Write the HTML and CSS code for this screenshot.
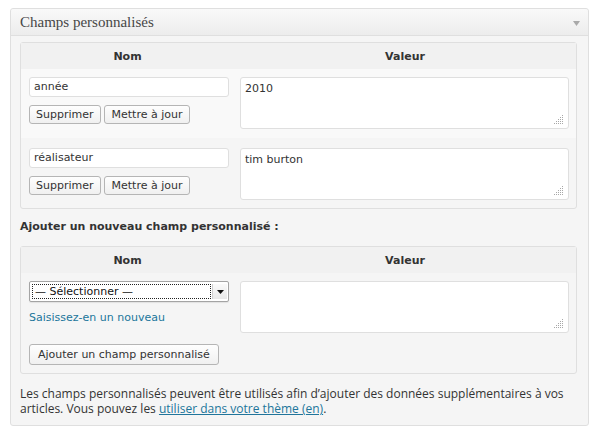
FILE: index.html
```html
<!DOCTYPE html>
<html lang="fr">
<head>
<meta charset="utf-8">
<title>Champs personnalisés</title>
<link rel="stylesheet" href="styles.css">
</head>
<body>
<div class="postbox">
  <div class="hndle">
    <h3>Champs personnalisés</h3>
    <svg class="toggle" width="7" height="5" viewBox="0 0 7 5"><path d="M0 0H7L3.5 5Z" fill="#a9a9a9"/></svg>
  </div>
  <div class="inside">
    <table class="list">
      <colgroup><col class="c-key"><col></colgroup>
      <thead><tr><th>Nom</th><th>Valeur</th></tr></thead>
      <tbody>
        <tr class="alt">
          <td class="key">
            <div class="field">année</div>
            <div class="btns"><span class="btn">Supprimer</span><span class="btn wide">Mettre à jour</span></div>
          </td>
          <td class="val"><div class="area">2010<svg class="grip" width="9" height="9" viewBox="0 0 9 9"><g fill="#a8a8a8"><rect x="8" y="0" width="1" height="1"/><rect x="6" y="2" width="1" height="1"/><rect x="8" y="2" width="1" height="1"/><rect x="4" y="4" width="1" height="1"/><rect x="6" y="4" width="1" height="1"/><rect x="8" y="4" width="1" height="1"/><rect x="2" y="6" width="1" height="1"/><rect x="4" y="6" width="1" height="1"/><rect x="6" y="6" width="1" height="1"/><rect x="8" y="6" width="1" height="1"/><rect x="0" y="8" width="1" height="1"/><rect x="2" y="8" width="1" height="1"/><rect x="4" y="8" width="1" height="1"/><rect x="6" y="8" width="1" height="1"/><rect x="8" y="8" width="1" height="1"/></g></svg></div></td>
        </tr>
        <tr class="second">
          <td class="key">
            <div class="field">réalisateur</div>
            <div class="btns"><span class="btn">Supprimer</span><span class="btn wide">Mettre à jour</span></div>
          </td>
          <td class="val"><div class="area">tim burton<svg class="grip" width="9" height="9" viewBox="0 0 9 9"><g fill="#a8a8a8"><rect x="8" y="0" width="1" height="1"/><rect x="6" y="2" width="1" height="1"/><rect x="8" y="2" width="1" height="1"/><rect x="4" y="4" width="1" height="1"/><rect x="6" y="4" width="1" height="1"/><rect x="8" y="4" width="1" height="1"/><rect x="2" y="6" width="1" height="1"/><rect x="4" y="6" width="1" height="1"/><rect x="6" y="6" width="1" height="1"/><rect x="8" y="6" width="1" height="1"/><rect x="0" y="8" width="1" height="1"/><rect x="2" y="8" width="1" height="1"/><rect x="4" y="8" width="1" height="1"/><rect x="6" y="8" width="1" height="1"/><rect x="8" y="8" width="1" height="1"/></g></svg></div></td>
        </tr>
      </tbody>
    </table>

    <p class="add-title">Ajouter un nouveau champ personnalisé :</p>

    <table class="list">
      <colgroup><col class="c-key"><col></colgroup>
      <thead><tr><th>Nom</th><th>Valeur</th></tr></thead>
      <tbody>
        <tr>
          <td class="key new">
            <div class="select"><span class="sel-label">— Sélectionner —</span><span class="sel-arrow"><svg width="7" height="4" viewBox="0 0 7 4"><path d="M0 0H7L3.5 4Z" fill="#111"/></svg></span></div>
            <a class="enternew" href="#">Saisissez-en un nouveau</a>
          </td>
          <td class="val new"><div class="area"><svg class="grip" width="9" height="9" viewBox="0 0 9 9"><g fill="#a8a8a8"><rect x="8" y="0" width="1" height="1"/><rect x="6" y="2" width="1" height="1"/><rect x="8" y="2" width="1" height="1"/><rect x="4" y="4" width="1" height="1"/><rect x="6" y="4" width="1" height="1"/><rect x="8" y="4" width="1" height="1"/><rect x="2" y="6" width="1" height="1"/><rect x="4" y="6" width="1" height="1"/><rect x="6" y="6" width="1" height="1"/><rect x="8" y="6" width="1" height="1"/><rect x="0" y="8" width="1" height="1"/><rect x="2" y="8" width="1" height="1"/><rect x="4" y="8" width="1" height="1"/><rect x="6" y="8" width="1" height="1"/><rect x="8" y="8" width="1" height="1"/></g></svg></div></td>
        </tr>
        <tr>
          <td class="submit" colspan="2"><span class="btn big">Ajouter un champ personnalisé</span></td>
        </tr>
      </tbody>
    </table>

    <p class="note">Les champs personnalisés peuvent être utilisés afin d’ajouter des données supplémentaires à vos articles. Vous pouvez les <a href="#">utiliser dans votre thème (en)</a>.</p>
  </div>
</div>
</body>
</html>
```

FILE: styles.css
```css
body {
  margin: 0;
  padding: 8px 0 0 10px;
  background: #fff;
  font-family: "DejaVu Sans", sans-serif;
  font-size: 11px;
  color: #333;
}

.postbox {
  width: 579px;
  box-sizing: border-box;
  border: 1px solid #dfdfdf;
  border-radius: 3px;
  background: #f5f5f5;
}

.hndle {
  height: 26px;
  display: flex;
  align-items: center;
  justify-content: space-between;
  padding: 0 8px 0 9px;
  background: linear-gradient(#f9f9f9, #ececec);
  border-bottom: 1px solid #dfdfdf;
  border-radius: 3px 3px 0 0;
}

.hndle h3 {
  margin: 0;
  font-family: "Liberation Serif", serif;
  font-weight: normal;
  font-size: 15px;
  color: #464646;
}

.toggle { display: block; margin-top: 3px; }

.inside {
  padding: 6px 12px 9px 9px;
}

table.list {
  width: 557px;
  table-layout: fixed;
  border: 1px solid #dfdfdf;
  border-radius: 3px;
  border-spacing: 0;
  background: #f5f5f5;
}

.c-key { width: 213px; }

table.list th {
  height: 26px;
  padding: 0;
  background: #f1f1f1;
  font-weight: bold;
  text-align: center;
  color: #333;
}

tr.alt td { background: #f9f9f9; }

td.key {
  padding: 8px 5px 9px 8px;
  vertical-align: top;
}

td.val {
  padding: 8px 6px 9px 6px;
  vertical-align: top;
}

tr.second td {
  padding-top: 10px;
  padding-bottom: 8px;
}

td.new { padding-bottom: 3px; }

.field {
  width: 200px;
  height: 20px;
  box-sizing: border-box;
  border: 1px solid #dfdfdf;
  border-radius: 3px;
  background: #fff;
  padding: 0 4px;
  line-height: 18px;
  font-size: 11px;
  color: #333;
}

.btns {
  display: flex;
  gap: 3px;
  margin-top: 8px;
}

.btn {
  display: inline-block;
  box-sizing: border-box;
  height: 19px;
  line-height: 17px;
  padding: 0 6px;
  border: 1px solid #b5b5b5;
  border-radius: 3px;
  background: linear-gradient(#fefefe, #f0f0f0);
  color: #333;
  white-space: nowrap;
}

.btn.wide {
  padding: 0 7px;
}

.btn.big {
  height: 21px;
  line-height: 19px;
  padding: 0 8px;
}

.area {
  position: relative;
  width: 329px;
  height: 52px;
  box-sizing: border-box;
  border: 1px solid #dfdfdf;
  border-radius: 3px;
  background: #fff;
  padding: 3px 4px;
  line-height: 16px;
  color: #333;
}

.grip {
  position: absolute;
  right: 5px;
  bottom: 4px;
}

.select {
  display: flex;
  width: 200px;
  height: 21px;
  box-sizing: border-box;
  border: 1px solid #a4a4a4;
  border-radius: 2px;
  background: #fff;
  padding: 2px 1px 2px 2px;
  box-shadow: 0 1px 1px rgba(0,0,0,0.08);
}

.sel-label {
  flex: 1;
  outline: 1px dotted #222;
  outline-offset: -1px;
  line-height: 15px;
  padding-left: 3px;
  color: #111;
}

.sel-arrow {
  width: 14px;
  margin-left: 1px;
  display: flex;
  align-items: center;
  justify-content: center;
  border-left: 1px solid #d0d0d0;
  background: linear-gradient(#fafafa, #e8e8e8);
}

.enternew {
  display: block;
  margin-top: 8px;
  line-height: 16px;
  color: #21759b;
  text-decoration: none;
}

td.submit {
  padding: 8px 8px 8px 8px;
}

.add-title {
  margin: 10px 0 11px;
  line-height: 16px;
  font-weight: bold;
  color: #333;
}

.note {
  margin: 12px 0 0;
  font-family: "Open Sans", sans-serif;
  font-size: 12px;
  line-height: 15px;
  color: #333;
}

.note a {
  color: #21759b;
  text-decoration: underline;
}
```
